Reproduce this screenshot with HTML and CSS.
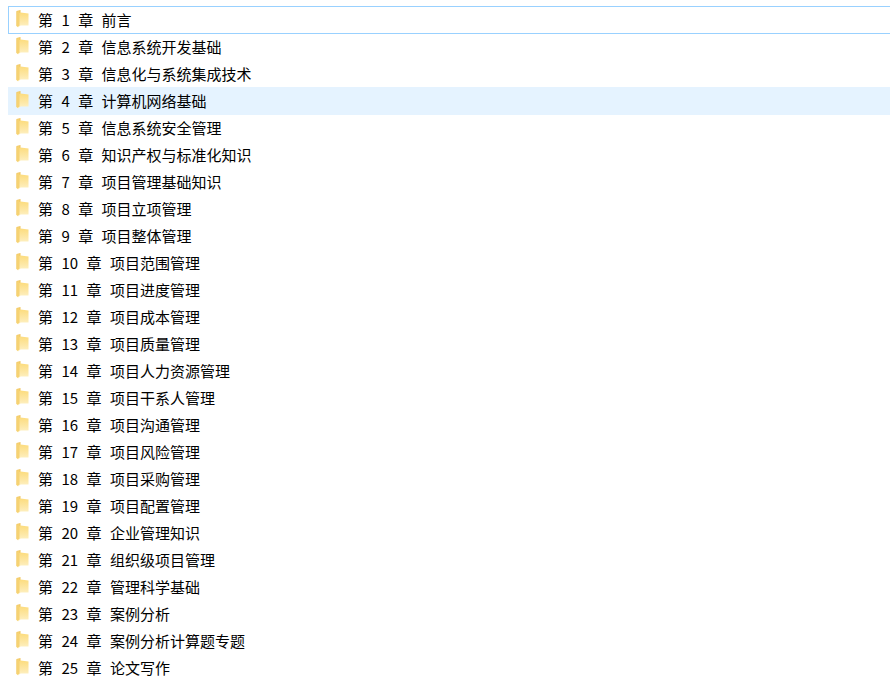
FILE: index.html
```html
<!DOCTYPE html>
<html lang="zh-CN">
<head>
<meta charset="utf-8">
<title>目录</title>
<link rel="stylesheet" href="styles.css">
</head>
<body>
<svg class="defs" width="0" height="0" aria-hidden="true">
  <defs>
    <linearGradient id="ff" x1="0" y1="0" x2="0" y2="1">
      <stop offset="0" stop-color="#fcdc7e"/>
      <stop offset="0.6" stop-color="#fde8a8"/>
      <stop offset="1" stop-color="#fef2c8"/>
    </linearGradient>
    <symbol id="folder" viewBox="0 0 13 18">
      <path d="M0.5 1 L4.5 0 L4.5 15 L0.5 16 Z" fill="#f0c45e"/>
      <path d="M4.5 2.5 L12.5 3.5 L12.5 15.5 L4.5 15.5 L2 17.5 L1.5 17 L1.5 3.5 Z" fill="url(#ff)"/>
      <path d="M0.5 1.5 L3.5 1 L3.5 15.5 L1.5 17 L0.5 16 Z" fill="#f6d272"/>
    </symbol>
  </defs>
</svg>
<ul class="list">
  <li class="row row-focus"><svg class="icon"><use href="#folder"/></svg><span class="name">第  1  章  前言</span></li>
  <li class="row"><svg class="icon"><use href="#folder"/></svg><span class="name">第  2  章  信息系统开发基础</span></li>
  <li class="row"><svg class="icon"><use href="#folder"/></svg><span class="name">第  3  章  信息化与系统集成技术</span></li>
  <li class="row row-hover"><svg class="icon"><use href="#folder"/></svg><span class="name">第  4  章  计算机网络基础</span></li>
  <li class="row"><svg class="icon"><use href="#folder"/></svg><span class="name">第  5  章  信息系统安全管理</span></li>
  <li class="row"><svg class="icon"><use href="#folder"/></svg><span class="name">第  6  章  知识产权与标准化知识</span></li>
  <li class="row"><svg class="icon"><use href="#folder"/></svg><span class="name">第  7  章  项目管理基础知识</span></li>
  <li class="row"><svg class="icon"><use href="#folder"/></svg><span class="name">第  8  章  项目立项管理</span></li>
  <li class="row"><svg class="icon"><use href="#folder"/></svg><span class="name">第  9  章  项目整体管理</span></li>
  <li class="row"><svg class="icon"><use href="#folder"/></svg><span class="name">第  10  章  项目范围管理</span></li>
  <li class="row"><svg class="icon"><use href="#folder"/></svg><span class="name">第  11  章  项目进度管理</span></li>
  <li class="row"><svg class="icon"><use href="#folder"/></svg><span class="name">第  12  章  项目成本管理</span></li>
  <li class="row"><svg class="icon"><use href="#folder"/></svg><span class="name">第  13  章  项目质量管理</span></li>
  <li class="row"><svg class="icon"><use href="#folder"/></svg><span class="name">第  14  章  项目人力资源管理</span></li>
  <li class="row"><svg class="icon"><use href="#folder"/></svg><span class="name">第  15  章  项目干系人管理</span></li>
  <li class="row"><svg class="icon"><use href="#folder"/></svg><span class="name">第  16  章  项目沟通管理</span></li>
  <li class="row"><svg class="icon"><use href="#folder"/></svg><span class="name">第  17  章  项目风险管理</span></li>
  <li class="row"><svg class="icon"><use href="#folder"/></svg><span class="name">第  18  章  项目采购管理</span></li>
  <li class="row"><svg class="icon"><use href="#folder"/></svg><span class="name">第  19  章  项目配置管理</span></li>
  <li class="row"><svg class="icon"><use href="#folder"/></svg><span class="name">第  20  章  企业管理知识</span></li>
  <li class="row"><svg class="icon"><use href="#folder"/></svg><span class="name">第  21  章  组织级项目管理</span></li>
  <li class="row"><svg class="icon"><use href="#folder"/></svg><span class="name">第  22  章  管理科学基础</span></li>
  <li class="row"><svg class="icon"><use href="#folder"/></svg><span class="name">第  23  章  案例分析</span></li>
  <li class="row"><svg class="icon"><use href="#folder"/></svg><span class="name">第  24  章  案例分析计算题专题</span></li>
  <li class="row"><svg class="icon"><use href="#folder"/></svg><span class="name">第  25  章  论文写作</span></li>
</ul>
</body>
</html>
```
FILE: styles.css
```css
html, body {
  margin: 0;
  padding: 0;
  background: #fff;
  overflow: hidden;
}
body {
  padding: 6px 0 0 8px;
  font-family: "Noto Sans CJK SC", "Liberation Sans", sans-serif;
  font-size: 15px;
  color: #000;
}
.defs {
  position: absolute;
}
.list {
  list-style: none;
  margin: 0;
  padding: 0;
}
.row {
  display: flex;
  align-items: center;
  gap: 9px;
  height: 28px;
  margin-bottom: -1px;
  box-sizing: border-box;
  padding: 0 0 1px 7px;
  border: 1px solid transparent;
  border-right: 0;
}
.row-focus {
  border-color: #99d1ff;
}
.row-hover {
  background: #e5f3ff;
  border-color: #e5f3ff;
}
.icon {
  width: 13px;
  height: 18px;
  flex: none;
  margin-top: -1px;
}
.name {
  white-space: pre;
  line-height: 25px;
  word-spacing: 0.85px;
}
```
